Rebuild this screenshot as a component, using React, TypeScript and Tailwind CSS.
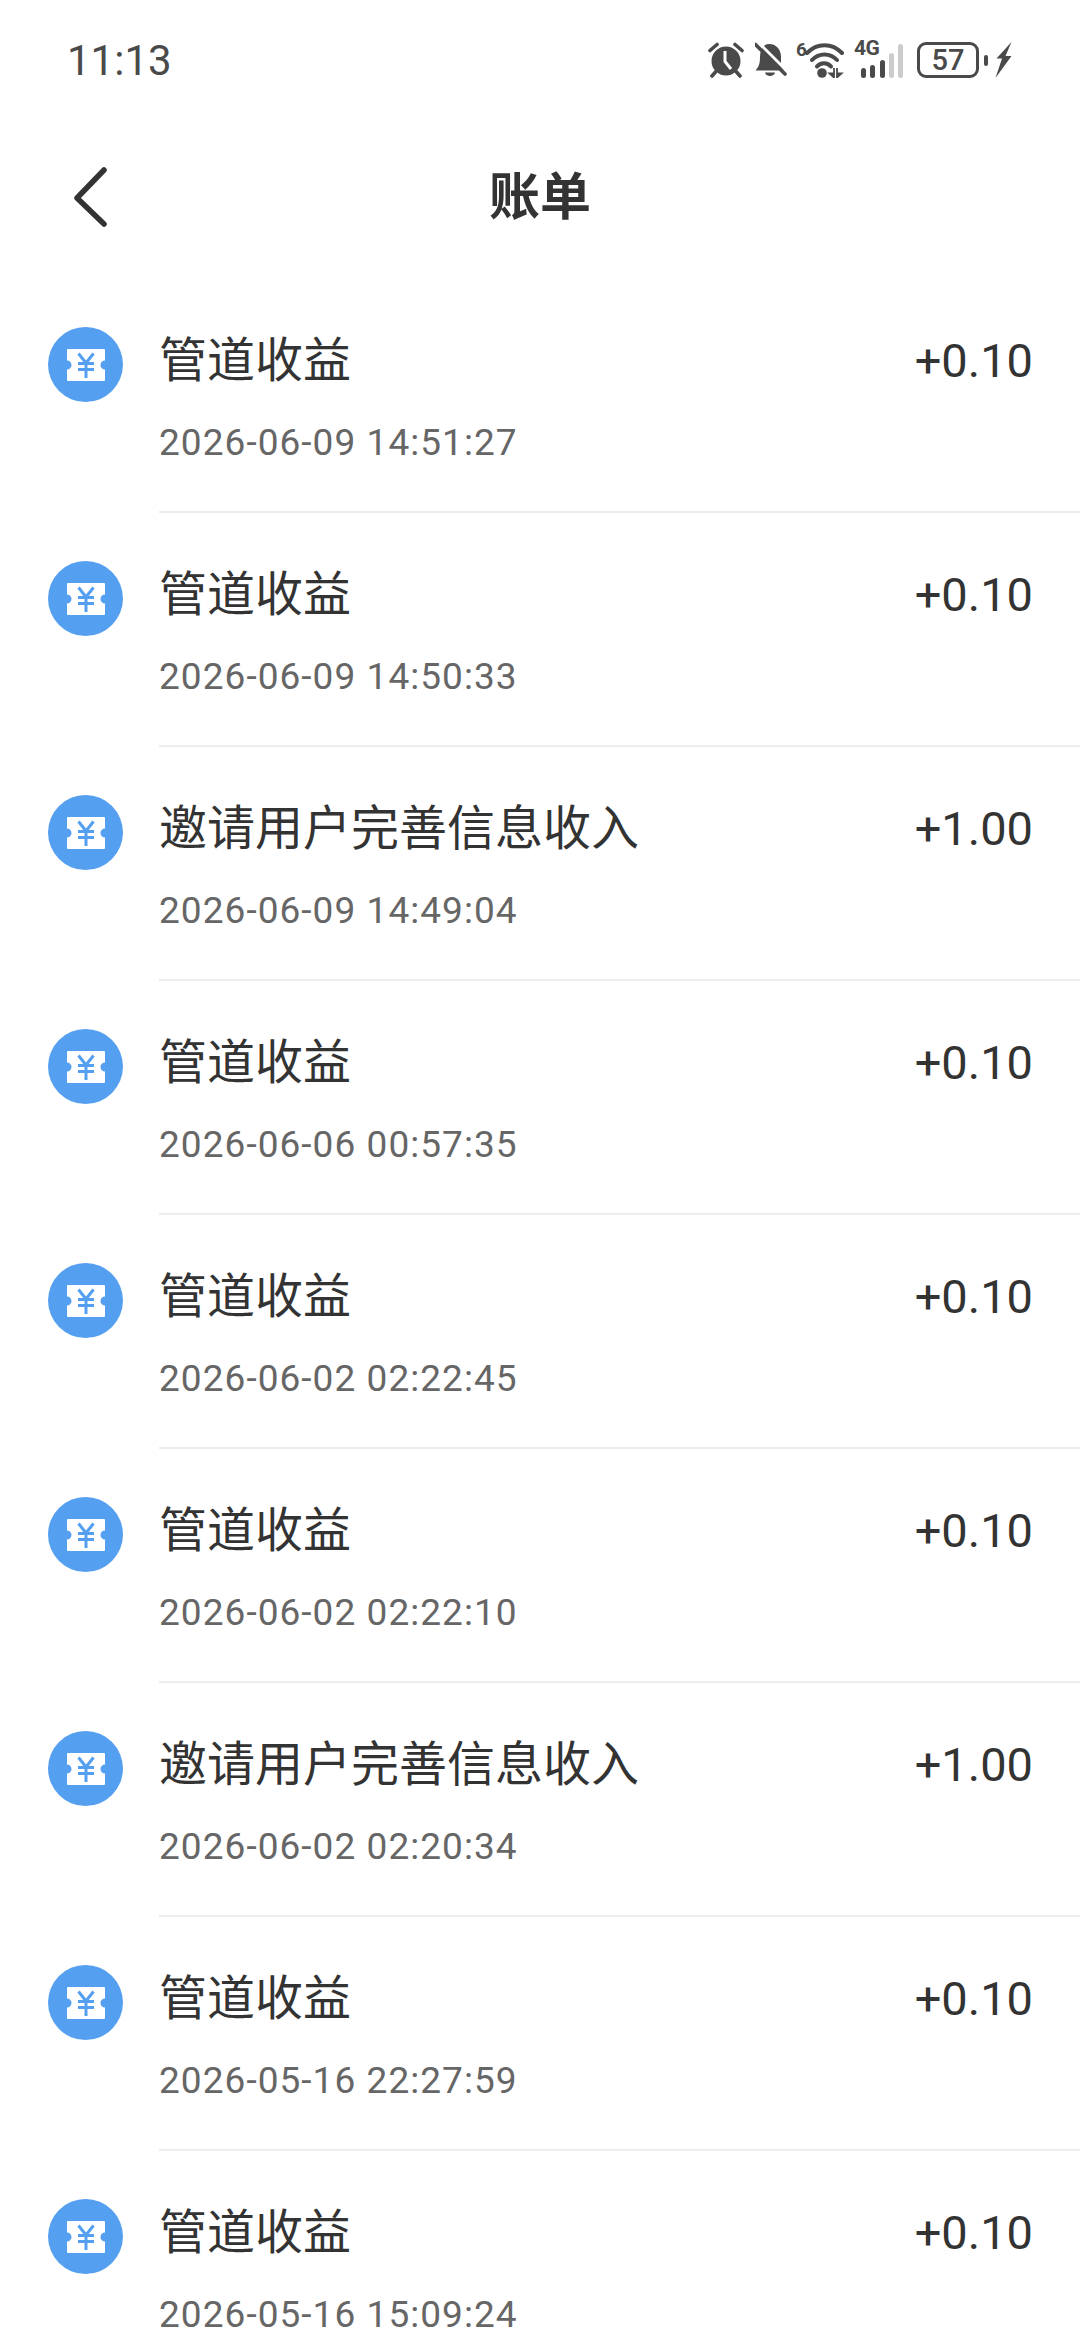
import React from 'react'

const records = [
  { title: '管道收益', time: '2026-06-09 14:51:27', amount: '+0.10' },
  { title: '管道收益', time: '2026-06-09 14:50:33', amount: '+0.10' },
  { title: '邀请用户完善信息收入', time: '2026-06-09 14:49:04', amount: '+1.00' },
  { title: '管道收益', time: '2026-06-06 00:57:35', amount: '+0.10' },
  { title: '管道收益', time: '2026-06-02 02:22:45', amount: '+0.10' },
  { title: '管道收益', time: '2026-06-02 02:22:10', amount: '+0.10' },
  { title: '邀请用户完善信息收入', time: '2026-06-02 02:20:34', amount: '+1.00' },
  { title: '管道收益', time: '2026-05-16 22:27:59', amount: '+0.10' },
  { title: '管道收益', time: '2026-05-16 15:09:24', amount: '+0.10' },
]

function TicketIcon() {
  return (
    <div className="w-[75px] h-[75px] rounded-full bg-[#559ff1] flex items-center justify-center shrink-0">
      <svg width="38" height="32" viewBox="0 0 38 32">
        <path
          d="M1 0H37a1 1 0 0 1 1 1V11.500a4.500 4.500 0 0 0 0 9V31a1 1 0 0 1-1 1H1a1 1 0 0 1-1-1V20.500a4.500 4.500 0 0 0 0-9V1a1 1 0 0 1 1-1Z"
          fill="#fff"
        />
        <path
          d="M11.500 4.500 19 14 26.500 4.500M11 14.500H27M11 20.500H27M19 14V29"
          fill="none"
          stroke="#559ff1"
          strokeWidth="3"
        />
      </svg>
    </div>
  )
}

function StatusIcons() {
  return (
    <div className="flex items-center text-[#4a4a4a]">
      {/* alarm */}
      <svg width="36" height="36" viewBox="0 0 36 36" className="mr-[11px]">
        <circle cx="18" cy="19" r="14.500" fill="#4a4a4a" />
        <path d="M17 9V19.500L23 27" fill="none" stroke="#fff" strokeWidth="3" />
        <path d="M2 8.500 9 2.500M34 8.500 27 2.500M7.500 30 4 34M28.500 30 32 34" stroke="#4a4a4a" strokeWidth="3.600" strokeLinecap="round" />
      </svg>
      {/* muted bell */}
      <svg width="32" height="36" viewBox="0 0 32 36" className="mr-[9px]">
        <path d="M14 2C22 2 26 8.500 26 15V24L29 28.500H0.500C3.500 25.500 5 22 5 15 5 8.500 8 2 14 2Z" fill="#4a4a4a" />
        <path d="M10 30.500H20C19.500 35 10.500 35 10 30.500Z" fill="#4a4a4a" />
        <path d="M3 0 32 29" stroke="#fff" strokeWidth="3" />
        <path d="M0.500 2.500 30 32" stroke="#4a4a4a" strokeWidth="3.600" strokeLinecap="round" />
      </svg>
      {/* wifi 6 */}
      <div className="relative w-[48px] h-[36px] mr-[10px]">
        <span className="absolute left-0 top-[-2px] text-[19px] leading-[20px] font-bold font-['Roboto',sans-serif]">6</span>
        <svg width="48" height="36" viewBox="0 0 48 36" className="absolute inset-0">
          <path d="M11 11C21 0.500 36 0.500 46 11M16 18C23 10.500 34 10.500 41 18M21 24.500C24.500 20 31.500 20 35 24.500" fill="none" stroke="#4a4a4a" strokeWidth="4" strokeLinecap="round" />
          <circle cx="26" cy="31" r="4.800" fill="#4a4a4a" />
          <path d="M38 26V35.500L33.500 31.500H38M41 26V35.500L45.500 31.500H41" fill="#4a4a4a" stroke="#4a4a4a" strokeWidth="1.800" />
        </svg>
      </div>
      {/* 4G signal */}
      <div className="relative w-[50px] h-[36px] mr-[13px]">
        <span className="absolute left-0 top-[-3px] text-[21px] leading-[18px] font-bold font-['Roboto',sans-serif] tracking-[-0.500px]">4G</span>
        <div className="absolute inset-0 flex items-end gap-[4.300px] pl-[7px]">
          <div className="w-[5px] h-[10px] rounded-full bg-[#4a4a4a]" />
          <div className="w-[5px] h-[13px] rounded-full bg-[#4a4a4a]" />
          <div className="w-[5px] h-[18px] rounded-full bg-[#4a4a4a]" />
          <div className="w-[5px] h-[25px] rounded-full bg-[#cccccc]" />
          <div className="w-[5px] h-[34px] rounded-full bg-[#cccccc]" />
        </div>
      </div>
      {/* battery */}
      <div className="w-[62px] h-[36px] rounded-[9px] border-[3px] border-[#4a4a4a] flex items-center justify-center text-[29px] leading-none font-medium font-['Roboto',sans-serif] mr-[5px]">
        57
      </div>
      <div className="w-[4px] h-[11px] rounded-full bg-[#4a4a4a] mr-[7px]" />
      <svg width="17" height="36" viewBox="0 0 17 36">
        <path d="M16.500 0 1.500 16.500H7L0.500 36 16.500 14H10.500L16.500 0Z" fill="#4a4a4a" />
      </svg>
    </div>
  )
}

export default function App() {
  return (
    <div className="w-[1080px] h-[2340px] overflow-hidden bg-white font-['Roboto','Noto_Sans_CJK_SC',sans-serif]">
      <div className="h-[120px] pl-[67px] pr-[68px] flex items-center justify-between">
        <span className="text-[42px] text-[#4a4a4a]">11:13</span>
        <StatusIcons />
      </div>

      <div className="h-[159px] flex items-center justify-center relative">
        <svg width="38" height="62" viewBox="0 0 38 62" className="absolute left-[71px] top-[46px]">
          <path d="M33 4 6 32 33 58" fill="none" stroke="#333333" strokeWidth="5.500" strokeLinecap="round" strokeLinejoin="round" />
        </svg>
        <h1 className="text-[51px] font-bold text-[#333333] mb-[3px]">账单</h1>
      </div>

      <div>
        {records.map((r, i) => (
          <div key={i} className="h-[234px] flex pl-[48px]">
            <div className="pt-[48px]">
              <TicketIcon />
            </div>
            <div className="flex-1 ml-[36px] border-b-2 border-[#ededed] pr-[47px]">
              <div className="flex items-center justify-between pt-[47px]">
                <span className="text-[48px] leading-[70px] text-[#333333]">{r.title}</span>
                <span className="text-[47px] leading-[70px] text-[#333333]">{r.amount}</span>
              </div>
              <div className="mt-[22px] text-[37px] leading-[50px] tracking-[1.050px] text-[#666666]">{r.time}</div>
            </div>
          </div>
        ))}
      </div>
    </div>
  )
}
